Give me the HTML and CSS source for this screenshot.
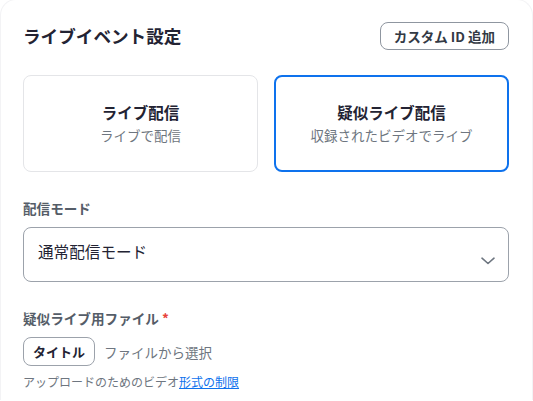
FILE: index.html
```html
<!DOCTYPE html>
<html lang="ja">
<head>
<meta charset="utf-8">
<link rel="stylesheet" href="styles.css">
</head>
<body>
<div class="panel">
  <div class="header">
    <h1 class="title">ライブイベント設定</h1>
    <button class="outline-btn">カスタム ID 追加</button>
  </div>
  <div class="cards">
    <div class="card">
      <div class="card-title">ライブ配信</div>
      <div class="card-sub">ライブで配信</div>
    </div>
    <div class="card selected">
      <div class="card-title">疑似ライブ配信</div>
      <div class="card-sub">収録されたビデオでライブ</div>
    </div>
  </div>
  <div class="field">
    <div class="label">配信モード</div>
    <div class="select">
      <span>通常配信モード</span>
      <svg class="chev" width="14" height="8" viewBox="0 0 14 8"><path d="M1 1.2 L7 6.5 L13 1.2" fill="none" stroke="#6e7680" stroke-width="1.6" stroke-linecap="round" stroke-linejoin="round"/></svg>
    </div>
  </div>
  <div class="field2">
    <div class="label">疑似ライブ用ファイル <span class="req">*</span></div>
    <div class="file-row">
      <button class="small-btn">タイトル</button>
      <span class="file-text">ファイルから選択</span>
    </div>
    <div class="note">アップロードのためのビデオ<a href="#" class="link">形式の制限</a></div>
  </div>
</div>
</body>
</html>
```

FILE: styles.css
```css
* { box-sizing: border-box; }
html, body { margin: 0; padding: 0; background: #fff; }
body {
  font-family: "Noto Sans CJK JP", "Noto Sans", sans-serif;
  color: #232333;
}
.panel {
  width: 533px;
  min-height: 401px;
  padding: 22px 23px 0 22px;
  border: 1px solid #f3f3f5;
  border-bottom: none;
  border-radius: 16px 16px 0 0;
  margin: -1px 0 0 0;
}
.header {
  display: flex;
  justify-content: space-between;
  align-items: center;
  height: 28px;
}
.title {
  margin: 0;
  font-size: 17.6px;
  font-weight: 700;
  line-height: 28px;
  color: #232333;
}
.outline-btn {
  height: 28px;
  padding: 0 13px;
  border: 1px solid #8f96a0;
  border-radius: 8px;
  background: #fff;
  font-family: inherit;
  font-size: 13.5px;
  font-weight: 700;
  color: #333a45;
  line-height: 26px;
}
.cards {
  display: grid;
  grid-template-columns: 1fr 1fr;
  gap: 16px;
  margin-top: 25px;
}
.card {
  height: 97px;
  border: 1px solid #e4e5e8;
  border-radius: 8px;
  display: flex;
  flex-direction: column;
  align-items: center;
  justify-content: center;
  gap: 1px;
}
.card.selected {
  border: 2px solid #0e72ed;
}
.card-title {
  font-size: 15.5px;
  font-weight: 700;
  line-height: 22px;
  color: #232333;
}
.card-sub {
  font-size: 13.5px;
  line-height: 22px;
  color: #6e7680;
}
.field { margin-top: 26px; }
.label {
  font-size: 13.6px;
  font-weight: 700;
  color: #555d68;
  line-height: 20px;
}
.req { color: #e8433b; font-weight: 700; }
.select {
  margin-top: 9px;
  height: 55px;
  border: 1px solid #9ca2ab;
  border-radius: 8px;
  display: flex;
  align-items: center;
  justify-content: space-between;
  padding: 0 13px 0 14px;
  font-size: 15.6px;
  color: #232333;
}
.select span { margin-top: -7px; }
.chev { margin-top: 13px; }
.field2 { margin-top: 26px; }
.file-row {
  display: flex;
  align-items: center;
  gap: 9px;
  margin-top: 9px;
}
.small-btn {
  height: 29px;
  padding: 0 9px;
  border: 1px solid #9ca2ab;
  border-radius: 8px;
  background: #fff;
  font-family: inherit;
  font-size: 13px;
  font-weight: 700;
  color: #232333;
}
.file-text {
  font-size: 13.5px;
  color: #6e7680;
}
.note {
  margin-top: 6px;
  font-size: 12px;
  color: #6e7680;
  line-height: 20px;
}
.link { color: #0e72ed; text-decoration: underline; }
```
